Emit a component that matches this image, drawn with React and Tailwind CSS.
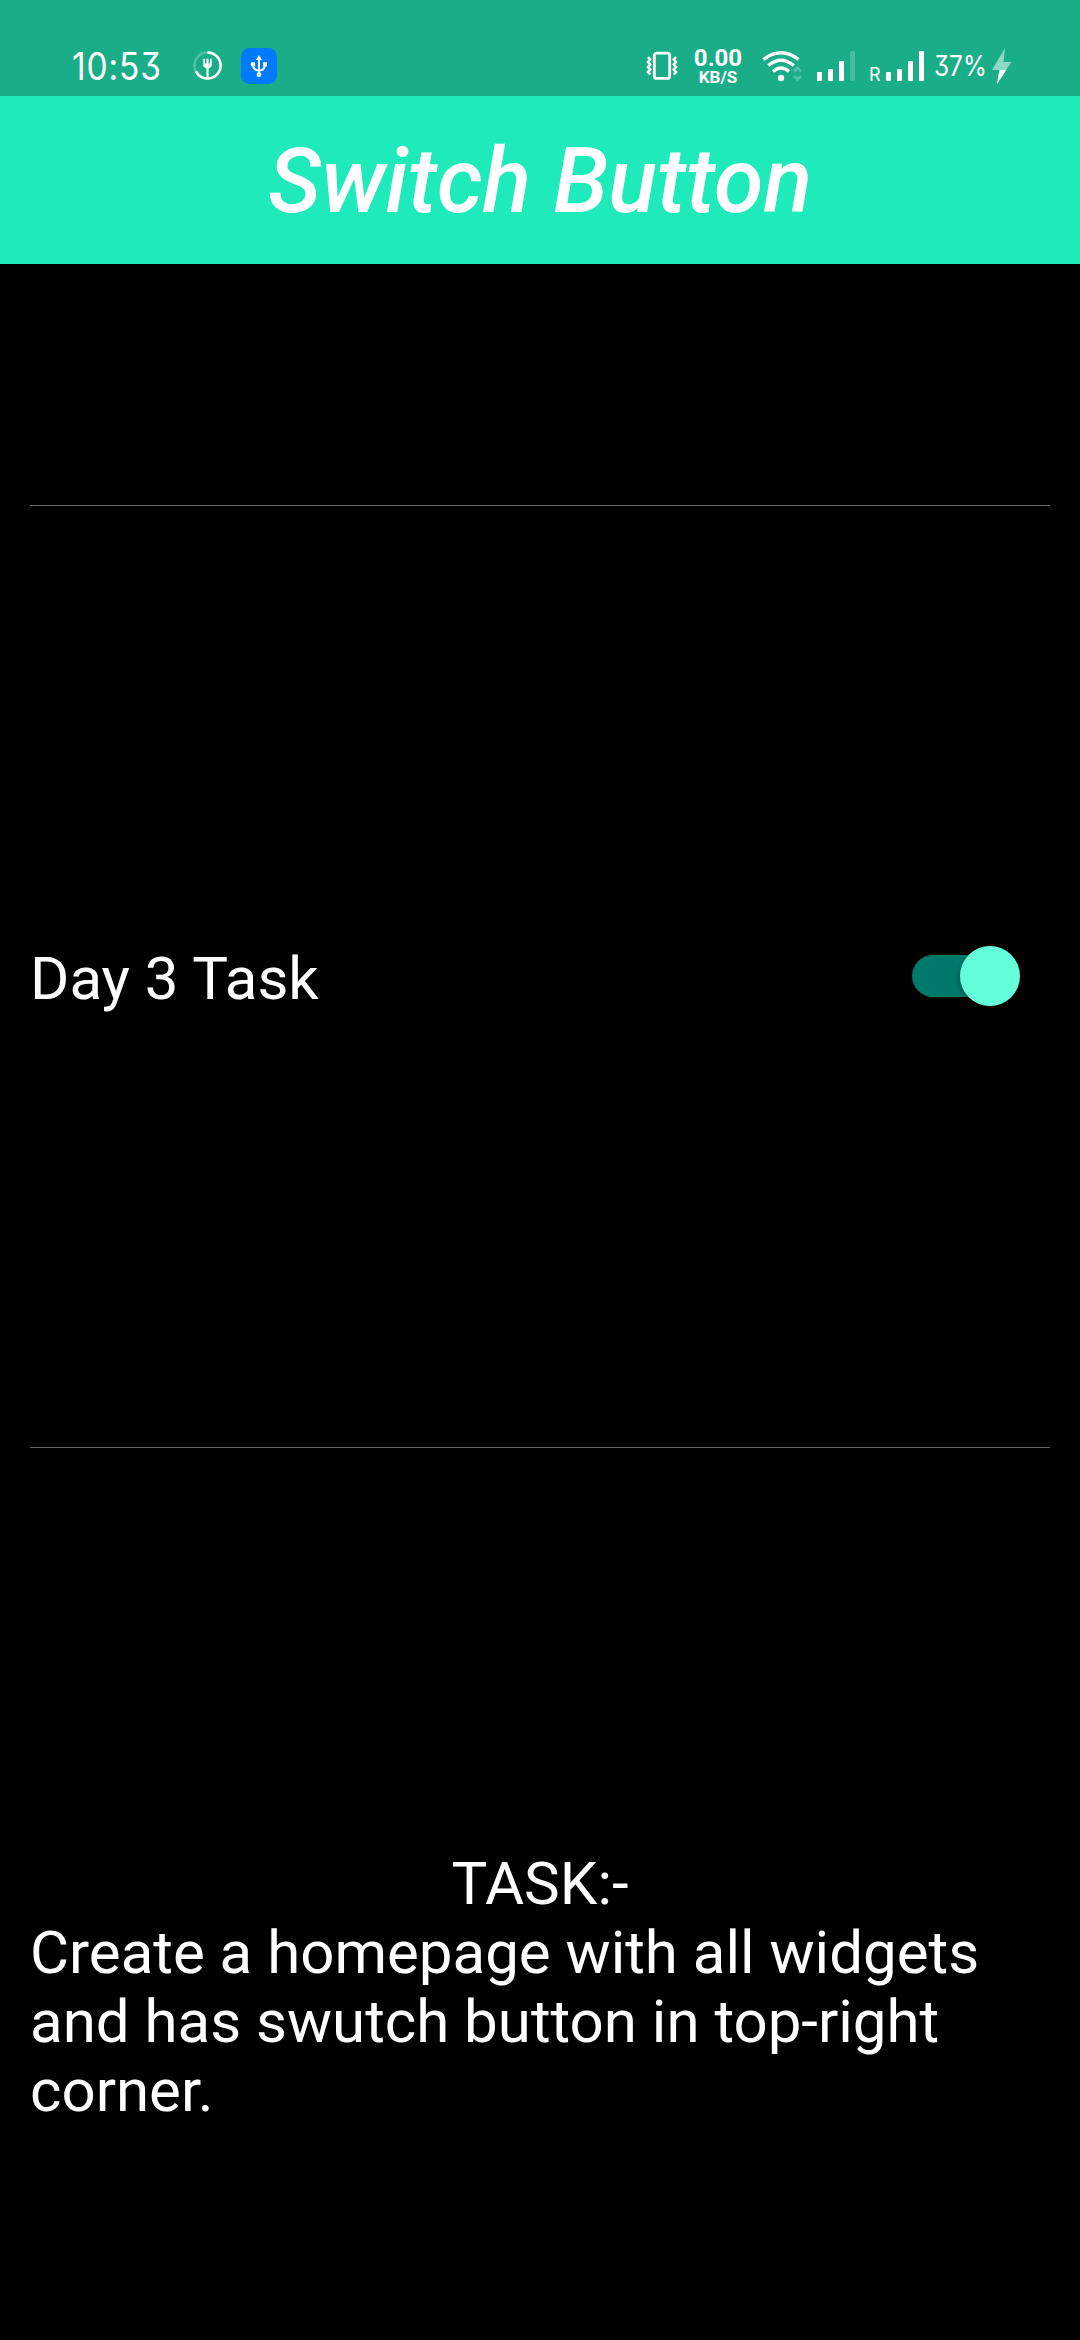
function MealIcon() {
  return (
    <svg className="ml-[30px] mt-[51px] h-[29px] w-[29px] shrink-0" viewBox="0 0 30 30" fill="none">
      <circle cx="15" cy="15" r="13.500" stroke="#fff" strokeOpacity=".25" strokeWidth="2.4" />
      <path d="M15 1.500a13.500 13.500 0 1 1-12 19.600" stroke="#fff" strokeWidth="2.6" />
      <path d="M11.500 8v6q0 3 3.500 3t3.500-3V8" stroke="#fff" strokeWidth="1.800" />
      <path d="M15 8v20" stroke="#fff" strokeWidth="2.2" />
      <path d="M11.500 13h7v3l-2 2h-3l-2-2z" fill="#fff" />
    </svg>
  );
}

function UsbIcon() {
  return (
    <svg className="ml-[19px] mt-12 h-9 w-9 shrink-0" viewBox="0 0 36 36" fill="none">
      <rect width="36" height="36" rx="8.5" fill="#007aff" />
      <path d="M18 9v18M12 16q0 6.500 6 6.500t6-6.500" stroke="#fff" strokeWidth="2" />
      <path d="M18 7l3.200 5h-6.400zM22 14.200h4v4h-4z" fill="#fff" />
      <circle cx="12" cy="16.200" r="2.300" fill="#fff" />
      <circle cx="18" cy="26.700" r="2.400" fill="#fff" />
    </svg>
  );
}

function VibrateIcon() {
  return (
    <svg className="mt-[51px] h-[30px] w-8 shrink-0" viewBox="0 0 32 30" fill="none" stroke="#fff">
      <rect x="8.300" y="2.200" width="15.400" height="25.200" rx="2.500" strokeWidth="2.800" />
      <path d="M2 6l2.200 2.500L2 11l2.200 2.500L2 16l2.200 2.500L2 21l2.200 2.500M30 6l-2.200 2.500L30 11l-2.200 2.500L30 16l-2.200 2.500L30 21l-2.200 2.500" strokeWidth="2.500" />
    </svg>
  );
}

function WifiIcon() {
  return (
    <svg className="ml-[18px] mt-[50px] h-8 w-10 shrink-0" viewBox="0 0 40 32" fill="none">
      <path d="M1.500 9.500Q19 -4 36.500 9.500" stroke="#fff" strokeWidth="3.400" />
      <path d="M6.300 15.500Q19 5 31.700 15.500" stroke="#fff" strokeWidth="3.400" />
      <path d="M11 21.500Q19 14.500 27 21.500" stroke="#fff" strokeWidth="3.400" />
      <circle cx="19" cy="28" r="3.200" fill="#fff" />
      <path d="M32 21.500l3.500-3.500 3.500 3.500M32 26l3.500 3.500L39 26" stroke="#fff" strokeOpacity=".25" strokeWidth="2.500" />
    </svg>
  );
}

function Signal({ className, faded }) {
  return (
    <svg className={className} viewBox="0 0 38 30" fill="#fff">
      <rect x="0" y="21" width="5" height="9" rx="1" />
      <rect x="11" y="18" width="5" height="12" rx="1" />
      <rect x="22" y="10" width="5" height="20" rx="1" />
      <rect x="33" y="0" width="5" height="30" rx="1" opacity={faded ? 0.2 : 1} />
    </svg>
  );
}

function BoltIcon() {
  return (
    <svg className="ml-[6px] mt-12 h-9 w-5 shrink-0" viewBox="0 0 20 36">
      <path d="M13 0L0 22h7.500L5 36 19.500 14h-8z" fill="#fff" fillOpacity=".5" />
      <path d="M7.500 22h6.800L5 36z" fill="#fff" />
    </svg>
  );
}

function StatusBar() {
  return (
    <header className="flex h-24 items-start justify-between bg-[#1aae88] pl-[72px] pr-[68px] text-white">
      <div className="flex items-start">
        <div className="mt-[43px] h-[46px] w-[91px] origin-left scale-x-[0.88] whitespace-nowrap font-['Inter',sans-serif] text-[38px] leading-[46px] tracking-[1px] [font-feature-settings:'cv09']">10:53</div>
        <MealIcon />
        <UsbIcon />
      </div>
      <div className="flex items-start">
        <VibrateIcon />
        <div className="ml-[14px] mt-[47px] flex w-[52px] flex-col items-center font-['Roboto',sans-serif] font-bold">
          <span className="text-[24px] leading-[22px]">0.00</span>
          <span className="text-[17px] leading-[17px]">KB/S</span>
        </div>
        <WifiIcon />
        <Signal className="ml-[15px] mt-[51px] h-[30px] w-[38px] shrink-0" faded />
        <div className="ml-[14px] mt-[65px] w-[17px] font-['Inter',sans-serif] text-[18px] leading-[20px]">R</div>
        <Signal className="mt-[51px] h-[30px] w-[38px] shrink-0" />
        <div className="ml-[10px] mt-[50px] w-[52px] origin-left scale-x-[0.87] whitespace-nowrap font-['Inter',sans-serif] text-[28px] leading-[32px] [font-feature-settings:'cv09']">37%</div>
        <BoltIcon />
      </div>
    </header>
  );
}

function Switch() {
  return (
    <button role="switch" aria-checked="true" aria-label="Day 3 Task" className="flex h-[42px] w-[108px] items-center justify-end">
      <span className="flex h-[42px] w-[98px] shrink-0 items-center rounded-full bg-[#00796b]" />
      <span className="-ml-[50px] h-[60px] w-[60px] shrink-0 rounded-full bg-[#64ffda] shadow-[0_2px_6px_rgba(0,0,0,0.4)]" />
    </button>
  );
}

export default function App() {
  return (
    <div className="flex h-[2340px] w-[1080px] flex-col overflow-hidden bg-black font-['Roboto',sans-serif] text-white">
      <StatusBar />
      <div className="flex h-[168px] items-center justify-center bg-[#1eebb9] pt-1">
        <h1 className="text-[90px] font-medium italic leading-[106px]">Switch Button</h1>
      </div>
      <main className="flex flex-col px-[30px]">
        <hr className="mt-[241px] h-px border-0 bg-[#666]" />
        <div className="mt-[434px] flex h-[72px] items-center justify-between pr-[30px]">
          <span className="pt-[6px] text-[60px] leading-[70px]">Day 3 Task</span>
          <Switch />
        </div>
        <hr className="mt-[435px] h-px border-0 bg-[#666]" />
        <section className="mt-[401px] text-[60px] leading-[69px]">
          <h2 className="text-center">TASK:-</h2>
          <p>Create a homepage with all widgets and has swutch button in top-right corner.</p>
        </section>
      </main>
    </div>
  );
}
